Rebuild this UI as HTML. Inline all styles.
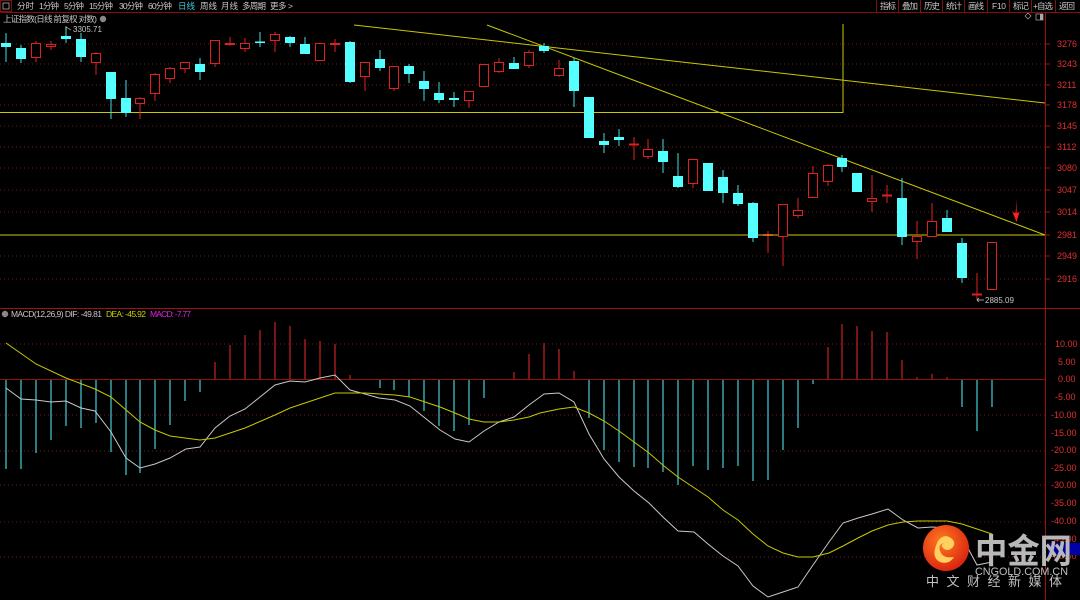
<!DOCTYPE html>
<html><head><meta charset="utf-8"><style>
html,body{margin:0;padding:0;background:#000;width:1080px;height:600px;overflow:hidden}
svg{display:block}
text{font-family:"Liberation Sans","Noto Sans CJK SC",sans-serif}
</style></head><body>
<svg width="1080" height="600" viewBox="0 0 1080 600" xmlns="http://www.w3.org/2000/svg">
<rect width="1080" height="600" fill="#000"/>
<!-- toolbar -->
<g font-size="8.5" fill="#c8c8c8">
<rect x="0.5" y="0.5" width="11" height="11" fill="none" stroke="#801010"/>
<rect x="3" y="3" width="6" height="6" fill="none" stroke="#aaa" stroke-width="0.8"/>
<text x="17" y="9" textLength="17">分时</text><text x="39" y="9" textLength="20">1分钟</text><text x="64" y="9" textLength="20">5分钟</text><text x="89" y="9" textLength="24">15分钟</text><text x="119" y="9" textLength="24">30分钟</text><text x="148" y="9" textLength="24">60分钟</text>
<text x="178" y="9" fill="#3ad0e0" textLength="17">日线</text><text x="200" y="9" textLength="17">周线</text><text x="221" y="9" textLength="17">月线</text><text x="242" y="9" textLength="24">多周期</text><text x="270" y="9" textLength="23">更多 &gt;</text>
</g>
<line x1="0" y1="12.5" x2="1080" y2="12.5" stroke="#801010"/>
<g font-size="8.5" fill="#c8c8c8">
<g stroke="#801010" fill="none"><line x1="876.5" y1="0" x2="876.5" y2="12"/><line x1="898.5" y1="0" x2="898.5" y2="12"/><line x1="920.5" y1="0" x2="920.5" y2="12"/><line x1="942.5" y1="0" x2="942.5" y2="12"/><line x1="964.5" y1="0" x2="964.5" y2="12"/><line x1="987.5" y1="0" x2="987.5" y2="12"/><line x1="1009.5" y1="0" x2="1009.5" y2="12"/><line x1="1031.5" y1="0" x2="1031.5" y2="12"/><line x1="1055.5" y1="0" x2="1055.5" y2="12"/></g>
<text x="880" y="9" textLength="16">指标</text><text x="902" y="9" textLength="16">叠加</text><text x="924" y="9" textLength="16">历史</text><text x="946" y="9" textLength="16">统计</text><text x="968" y="9" textLength="16">画线</text><text x="992" y="9" textLength="14">F10</text><text x="1013" y="9" textLength="16">标记</text><text x="1033" y="9" textLength="20">+自选</text><text x="1059" y="9" textLength="16">返回</text>
</g>
<text x="3" y="22" font-size="8.5" fill="#c8c8c8" textLength="94">上证指数(日线 前复权 对数)</text>
<circle cx="103" cy="19" r="3.2" fill="#888"/>
<path d="M1025 16 l3 -3 l3 3 l-3 3 z" fill="none" stroke="#aaa" stroke-width="0.7"/>
<rect x="1036" y="14" width="7" height="6" fill="none" stroke="#aaa" stroke-width="0.7"/><rect x="1040" y="14" width="3" height="6" fill="#aaa"/>
<!-- axis lines -->
<line x1="1045.5" y1="13" x2="1045.5" y2="600" stroke="#a01010"/>
<line x1="0" y1="308.5" x2="1080" y2="308.5" stroke="#a01010"/>
<!-- price grid -->
<g stroke="#701818" stroke-dasharray="1,3">
<line x1="0" y1="44" x2="1045" y2="44"/><line x1="0" y1="64" x2="1045" y2="64"/><line x1="0" y1="85" x2="1045" y2="85"/><line x1="0" y1="105" x2="1045" y2="105"/><line x1="0" y1="126" x2="1045" y2="126"/><line x1="0" y1="147" x2="1045" y2="147"/><line x1="0" y1="168" x2="1045" y2="168"/><line x1="0" y1="190" x2="1045" y2="190"/><line x1="0" y1="212" x2="1045" y2="212"/><line x1="0" y1="256" x2="1045" y2="256"/><line x1="0" y1="279" x2="1045" y2="279"/>
<line x1="0" y1="344" x2="1045" y2="344"/><line x1="0" y1="415" x2="1045" y2="415"/><line x1="0" y1="451" x2="1045" y2="451"/><line x1="0" y1="485" x2="1045" y2="485"/><line x1="0" y1="522" x2="1045" y2="522"/><line x1="0" y1="557" x2="1045" y2="557"/>
</g>
<g stroke="#a01010"><line x1="1045" y1="44" x2="1050" y2="44"/><line x1="1045" y1="64" x2="1050" y2="64"/><line x1="1045" y1="85" x2="1050" y2="85"/><line x1="1045" y1="105" x2="1050" y2="105"/><line x1="1045" y1="126" x2="1050" y2="126"/><line x1="1045" y1="147" x2="1050" y2="147"/><line x1="1045" y1="168" x2="1050" y2="168"/><line x1="1045" y1="190" x2="1050" y2="190"/><line x1="1045" y1="212" x2="1050" y2="212"/><line x1="1045" y1="235" x2="1050" y2="235"/><line x1="1045" y1="256" x2="1050" y2="256"/><line x1="1045" y1="279" x2="1050" y2="279"/></g>
<g font-size="9" fill="#e03030">
<text x="1057" y="47">3276</text><text x="1057" y="67">3243</text><text x="1057" y="88">3211</text><text x="1057" y="108">3178</text><text x="1057" y="129">3145</text><text x="1057" y="150">3112</text><text x="1057" y="171">3080</text><text x="1057" y="193">3047</text><text x="1057" y="215">3014</text><text x="1057" y="238">2981</text><text x="1057" y="259">2949</text><text x="1057" y="282">2916</text>
<text x="1055" y="347">10.00</text><text x="1058" y="365">5.00</text><text x="1058" y="382">0.00</text><text x="1055" y="400">-5.00</text><text x="1051" y="418">-10.00</text><text x="1051" y="436">-15.00</text><text x="1051" y="453">-20.00</text><text x="1051" y="471">-25.00</text><text x="1051" y="488">-30.00</text><text x="1051" y="506">-35.00</text><text x="1051" y="524">-40.00</text><text x="1051" y="542">-45.00</text><text x="1051" y="559">-50.00</text>
</g>
<!-- yellow lines -->
<g stroke="#c8c800" stroke-width="1" fill="none">
<polyline points="0,112.5 843,112.5 843,24"/>
<line x1="0" y1="235" x2="1045" y2="235"/>
<line x1="354" y1="25" x2="1045" y2="103"/>
<line x1="487" y1="25" x2="1045" y2="235"/>
</g>
<!-- candles: cyan -->
<g stroke="#40e0e0" stroke-width="1">
<line x1="6" y1="33" x2="6" y2="62"/><line x1="21" y1="45" x2="21" y2="63"/><line x1="66" y1="27" x2="66" y2="43"/><line x1="81" y1="33" x2="81" y2="62"/><line x1="111" y1="72" x2="111" y2="119"/><line x1="126" y1="80" x2="126" y2="117"/><line x1="200" y1="58" x2="200" y2="80"/><line x1="260" y1="32" x2="260" y2="47"/><line x1="290" y1="36" x2="290" y2="47"/><line x1="305" y1="37" x2="305" y2="54"/><line x1="350" y1="41" x2="350" y2="83"/><line x1="380" y1="50" x2="380" y2="71"/><line x1="409" y1="64" x2="409" y2="83"/><line x1="424" y1="71" x2="424" y2="101"/><line x1="439" y1="82" x2="439" y2="103"/><line x1="454" y1="92" x2="454" y2="107"/><line x1="514" y1="57" x2="514" y2="69"/><line x1="544" y1="43" x2="544" y2="53"/><line x1="574" y1="58" x2="574" y2="107"/><line x1="604" y1="133" x2="604" y2="153"/><line x1="619" y1="129" x2="619" y2="146"/><line x1="663" y1="139" x2="663" y2="173"/><line x1="678" y1="153" x2="678" y2="188"/><line x1="723" y1="170" x2="723" y2="203"/><line x1="738" y1="185" x2="738" y2="206"/><line x1="753" y1="202" x2="753" y2="242"/><line x1="842" y1="155" x2="842" y2="172"/><line x1="902" y1="178" x2="902" y2="245"/><line x1="947" y1="210" x2="947" y2="232"/><line x1="962" y1="238" x2="962" y2="283"/>
</g>
<g fill="#54ffff">
<rect x="1" y="43" width="10" height="4"/><rect x="16" y="48" width="10" height="11"/><rect x="61" y="36" width="10" height="3"/><rect x="76" y="39" width="10" height="18"/><rect x="106" y="72" width="10" height="27"/><rect x="121" y="98" width="10" height="15"/><rect x="195" y="64" width="10" height="8"/><rect x="255" y="41.5" width="10" height="1.5"/><rect x="285" y="37" width="10" height="6"/><rect x="300" y="44" width="10" height="10"/><rect x="345" y="42" width="10" height="40"/><rect x="375" y="59" width="10" height="9"/><rect x="404" y="66" width="10" height="8"/><rect x="419" y="81" width="10" height="8"/><rect x="434" y="93" width="10" height="7"/><rect x="449" y="98" width="10" height="2"/><rect x="509" y="63" width="10" height="6"/><rect x="539" y="46" width="10" height="5"/><rect x="569" y="61" width="10" height="30"/><rect x="584" y="97" width="10" height="41"/><rect x="599" y="141" width="10" height="4"/><rect x="614" y="137" width="10" height="3"/><rect x="658" y="151" width="10" height="11"/><rect x="673" y="176" width="10" height="11"/><rect x="703" y="163" width="10" height="28"/><rect x="718" y="177" width="10" height="16"/><rect x="733" y="193" width="10" height="11"/><rect x="748" y="203" width="10" height="35"/><rect x="837" y="158" width="10" height="9"/><rect x="852" y="173" width="10" height="19"/><rect x="897" y="198" width="10" height="39"/><rect x="942" y="218" width="10" height="14"/><rect x="957" y="243" width="10" height="35"/>
</g>
<!-- red candles -->
<g stroke="#e02020" stroke-width="1" fill="#000">
<line x1="36" y1="41" x2="36" y2="62"/><line x1="51" y1="41" x2="51" y2="50"/><line x1="96" y1="52" x2="96" y2="75"/><line x1="140" y1="97" x2="140" y2="119"/><line x1="155" y1="73" x2="155" y2="101"/><line x1="170" y1="67" x2="170" y2="83"/><line x1="185" y1="62" x2="185" y2="73"/><line x1="215" y1="40" x2="215" y2="67"/><line x1="230" y1="37" x2="230" y2="46"/><line x1="245" y1="38" x2="245" y2="52"/><line x1="275" y1="32" x2="275" y2="52"/><line x1="335" y1="39" x2="335" y2="52"/><line x1="365" y1="62" x2="365" y2="91"/><line x1="394" y1="66" x2="394" y2="91"/><line x1="469" y1="91" x2="469" y2="108"/><line x1="499" y1="58" x2="499" y2="73"/><line x1="529" y1="50" x2="529" y2="68"/><line x1="559" y1="60" x2="559" y2="77"/><line x1="634" y1="137" x2="634" y2="160"/><line x1="648" y1="139" x2="648" y2="159"/><line x1="693" y1="159" x2="693" y2="188"/><line x1="768" y1="231" x2="768" y2="253"/><line x1="783" y1="204" x2="783" y2="266"/><line x1="798" y1="198" x2="798" y2="218"/><line x1="813" y1="166" x2="813" y2="198"/><line x1="828" y1="164" x2="828" y2="186"/><line x1="872" y1="175" x2="872" y2="212"/><line x1="887" y1="185" x2="887" y2="203"/><line x1="917" y1="221" x2="917" y2="259"/><line x1="932" y1="203" x2="932" y2="237"/><line x1="977" y1="273" x2="977" y2="300"/>
<rect x="31.5" y="43.5" width="9" height="14"/><rect x="46.5" y="44.5" width="9" height="2"/><rect x="91.5" y="53.5" width="9" height="9"/><rect x="135.5" y="98.5" width="9" height="5"/><rect x="150.5" y="74.5" width="9" height="19"/><rect x="165.5" y="68.5" width="9" height="10"/><rect x="180.5" y="62.5" width="9" height="6"/><rect x="210.5" y="40.5" width="9" height="23"/><rect x="225.5" y="43.5" width="9" height="1"/><rect x="240.5" y="43.5" width="9" height="5"/><rect x="270.5" y="34.5" width="9" height="6"/><rect x="315.5" y="43.5" width="9" height="17"/><rect x="330.5" y="43.5" width="9" height="1"/><rect x="360.5" y="62.5" width="9" height="14"/><rect x="389.5" y="66.5" width="9" height="22"/><rect x="464.5" y="91.5" width="9" height="9"/><rect x="479.5" y="64.5" width="9" height="22"/><rect x="494.5" y="62.5" width="9" height="9"/><rect x="524.5" y="52.5" width="9" height="13"/><rect x="554.5" y="68.5" width="9" height="7"/><rect x="629.5" y="144" width="9" height="1"/><rect x="643.5" y="149.5" width="9" height="7"/><rect x="688.5" y="159.5" width="9" height="24"/><rect x="778.5" y="204.5" width="9" height="32"/><rect x="793.5" y="210.5" width="9" height="5"/><rect x="808.5" y="173.5" width="9" height="24"/><rect x="823.5" y="165.5" width="9" height="16"/><rect x="867.5" y="198.5" width="9" height="3"/><rect x="882.5" y="195" width="9" height="1"/><rect x="912.5" y="236.5" width="9" height="5"/><rect x="927.5" y="221.5" width="9" height="15"/><rect x="972.5" y="294" width="9" height="1"/><rect x="987.5" y="242.5" width="9" height="47"/>
</g>
<line x1="763" y1="235" x2="773" y2="235" stroke="#ff8030" stroke-width="1.5"/>
<!-- annotations -->
<text x="73" y="32" font-size="8" fill="#c8c8c8">3305.71</text>
<path d="M66 26 v4 M66 27 l5 3" stroke="#c8c8c8" stroke-width="0.7" fill="none"/>
<text x="985" y="303" font-size="8" fill="#c8c8c8">2885.09</text>
<path d="M977 300 h7 M977 300 l2 -2 M977 300 l2 2" stroke="#c8c8c8" stroke-width="0.7" fill="none"/>
<path d="M1017 199 l-1.5 14 l-3 -1 l4 10 l3 -10 l-3 1 z" fill="#ff2020"/>
<!-- MACD -->
<circle cx="5" cy="314" r="3.2" fill="#888"/>
<text x="11" y="317" font-size="8.5" fill="#c8c8c8" textLength="91">MACD(12,26,9) DIF: -49.81</text>
<text x="106" y="317" font-size="8.5" fill="#d0d000" textLength="40">DEA: -45.92</text>
<text x="150" y="317" font-size="8.5" fill="#e020e0" textLength="41">MACD: -7.77</text>
<line x1="0" y1="379.5" x2="1045" y2="379.5" stroke="#901010"/>
<g stroke="#40c0c8" stroke-width="1.3">
<line x1="6" y1="380" x2="6" y2="469"/><line x1="21" y1="380" x2="21" y2="469"/><line x1="36" y1="380" x2="36" y2="453"/><line x1="51" y1="380" x2="51" y2="440"/><line x1="66" y1="380" x2="66" y2="426"/><line x1="81" y1="380" x2="81" y2="428"/><line x1="96" y1="380" x2="96" y2="423"/><line x1="111" y1="380" x2="111" y2="452"/><line x1="126" y1="380" x2="126" y2="475"/><line x1="140" y1="380" x2="140" y2="473"/><line x1="155" y1="380" x2="155" y2="449"/><line x1="170" y1="380" x2="170" y2="425"/><line x1="185" y1="380" x2="185" y2="401"/><line x1="200" y1="380" x2="200" y2="392"/><line x1="380" y1="380" x2="380" y2="388"/><line x1="394" y1="380" x2="394" y2="390"/><line x1="409" y1="380" x2="409" y2="397"/><line x1="424" y1="380" x2="424" y2="411"/><line x1="439" y1="380" x2="439" y2="426"/><line x1="454" y1="380" x2="454" y2="431"/><line x1="469" y1="380" x2="469" y2="425"/><line x1="484" y1="380" x2="484" y2="398"/>
<line x1="589" y1="380" x2="589" y2="418"/><line x1="604" y1="380" x2="604" y2="450"/><line x1="619" y1="380" x2="619" y2="462"/><line x1="634" y1="380" x2="634" y2="467"/><line x1="648" y1="380" x2="648" y2="468"/><line x1="663" y1="380" x2="663" y2="472"/><line x1="678" y1="380" x2="678" y2="485"/><line x1="693" y1="380" x2="693" y2="466"/><line x1="708" y1="380" x2="708" y2="470"/><line x1="723" y1="380" x2="723" y2="468"/><line x1="738" y1="380" x2="738" y2="466"/><line x1="753" y1="380" x2="753" y2="481"/><line x1="768" y1="380" x2="768" y2="480"/><line x1="783" y1="380" x2="783" y2="450"/><line x1="798" y1="380" x2="798" y2="428"/><line x1="813" y1="380" x2="813" y2="384"/><line x1="962" y1="380" x2="962" y2="407"/><line x1="977" y1="380" x2="977" y2="431"/><line x1="992" y1="380" x2="992" y2="407"/>
</g>
<g stroke="#b82020" stroke-width="1.3">
<line x1="215" y1="379" x2="215" y2="362"/><line x1="230" y1="379" x2="230" y2="345"/><line x1="245" y1="379" x2="245" y2="335"/><line x1="260" y1="379" x2="260" y2="330"/><line x1="275" y1="379" x2="275" y2="322"/><line x1="290" y1="379" x2="290" y2="326"/><line x1="305" y1="379" x2="305" y2="339"/><line x1="320" y1="379" x2="320" y2="341"/><line x1="335" y1="379" x2="335" y2="344"/><line x1="350" y1="379" x2="350" y2="375"/><line x1="514" y1="379" x2="514" y2="372"/><line x1="529" y1="379" x2="529" y2="354"/><line x1="544" y1="379" x2="544" y2="343"/><line x1="559" y1="379" x2="559" y2="349"/><line x1="574" y1="379" x2="574" y2="371"/><line x1="828" y1="379" x2="828" y2="347"/><line x1="842" y1="379" x2="842" y2="324"/><line x1="857" y1="379" x2="857" y2="326"/><line x1="872" y1="379" x2="872" y2="331"/><line x1="887" y1="379" x2="887" y2="332"/><line x1="902" y1="379" x2="902" y2="360"/><line x1="917" y1="379" x2="917" y2="377"/><line x1="932" y1="379" x2="932" y2="374"/><line x1="947" y1="379" x2="947" y2="377"/>
</g>
<polyline fill="none" stroke="#c8c8c8" stroke-width="1" points="6,388 21,399 36,400 51,402 66,401 81,408 95,411 111,432 126,458 140,468 155,464 170,458 186,449 200,447 215,428 230,416 245,409 260,397 275,385 290,381 305,382 320,378 335,375 350,390 365,394 379,398 395,400 410,406 425,418 440,430 455,439 469,442 484,431 499,422 514,417 529,405 540,397 544,394 559,393 574,402 589,434 604,459 619,477 634,491 649,503 664,518 678,531 694,532 708,544 723,556 738,566 753,586 768,597 783,592 798,587 813,565 829,542 843,523 858,518 872,514 888,509 903,520 918,528 932,527 948,528 962,537 977,565 992,562"/>
<polyline fill="none" stroke="#c8c800" stroke-width="1" points="6,343 36,364 66,378 95,389 111,397 140,422 155,430 170,436 200,440 215,438 245,428 275,415 290,408 320,398 335,393 365,393 395,395 410,397 425,402 440,407 455,413 469,419 484,422 499,422 514,420 529,417 540,413 559,409 574,407 589,413 604,421 619,431 634,442 649,453 664,466 678,477 708,497 723,510 738,520 753,534 768,546 783,553 798,557 813,557 829,553 843,546 858,538 872,531 888,525 903,522 918,521 947,521 962,524 977,529 992,534"/>
<!-- logo -->
<rect x="1048" y="543" width="32" height="12" fill="#0000a8"/>
<defs><radialGradient id="g" cx="0.4" cy="0.35" r="0.7"><stop offset="0" stop-color="#ff7a20"/><stop offset="1" stop-color="#d82010"/></radialGradient></defs>
<circle cx="946" cy="548" r="23" fill="url(#g)"/>
<path d="M938 541 q6 -8 13 -3 q6 5 1 10 q-5 4 -9 0 q-3 -3 1 -5 q-6 1 -4 8 q3 8 14 6 q-5 8 -14 5 q-10 -5 -2 -21 z" fill="#ffd060"/>
<text x="975" y="563" font-size="34" font-weight="bold" fill="#b8b8b8" textLength="97" lengthAdjust="spacingAndGlyphs">中金网</text>
<text x="975" y="575" font-size="11" fill="#c0c0c0" textLength="93" lengthAdjust="spacingAndGlyphs">CNGOLD.COM.CN</text>
<text x="926" y="586" font-size="13" fill="#c0c0c0" textLength="136">中文财经新媒体</text>
</svg>
</body></html>
